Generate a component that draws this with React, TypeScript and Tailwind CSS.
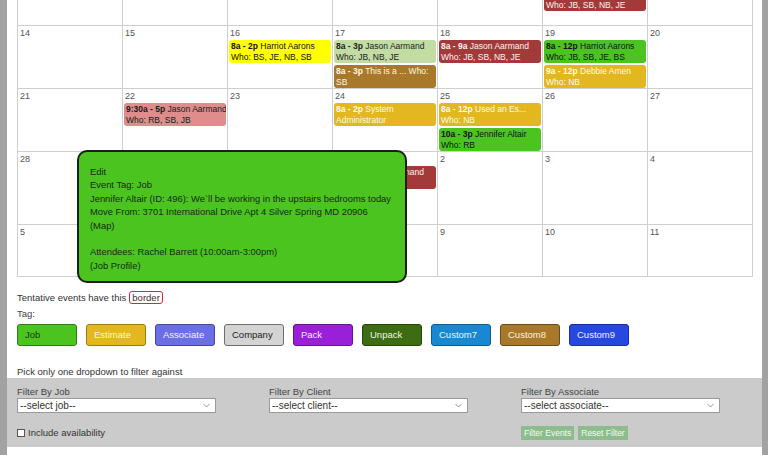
import type { ReactNode } from 'react';

type CalEvent = {
  time: string;
  text: ReactNode;
  tone: string;
};

type Week = {
  height: string;
  days: { date: number; events?: CalEvent[] }[];
};

const RED = 'bg-[#a33a3a] text-[#fdf2f2]';
const GOLD = 'bg-[#e2b71f] text-[#fffbe8]';
const GREEN = 'bg-[#4cc420] text-[#111]';
const BROWN = 'bg-[#a8792b] text-[#fff6e4]';
const SAGE = 'bg-[#c3dca4] text-[#222]';
const YELLOW = 'bg-[#ffff00] text-[#111]';
const PINK = 'bg-[#df8c8c] text-[#1a1a1a]';

const weeks: Week[] = [
  {
    height: 'h-[52px]',
    days: [
      { date: 7 },
      { date: 8 },
      { date: 9 },
      { date: 10 },
      { date: 11 },
      {
        date: 12,
        events: [{ time: '8a - 9a', text: <>Jason Aarmand<br />Who: JB, SB, NB, JE</>, tone: RED }]
      },
      { date: 13 }
    ]
  },
  {
    height: 'h-[63px]',
    days: [
      { date: 14 },
      { date: 15 },
      {
        date: 16,
        events: [{ time: '8a - 2p', text: <>Harriot Aarons<br />Who: BS, JE, NB, SB</>, tone: YELLOW }]
      },
      {
        date: 17,
        events: [
          { time: '8a - 3p', text: <>Jason Aarmand<br />Who: JB, NB, JE</>, tone: SAGE },
          { time: '8a - 3p', text: <>This is a ... Who:<br />SB</>, tone: BROWN }
        ]
      },
      {
        date: 18,
        events: [{ time: '8a - 9a', text: <>Jason Aarmand<br />Who: JB, SB, NB, JE</>, tone: RED }]
      },
      {
        date: 19,
        events: [
          { time: '8a - 12p', text: <>Harriot Aarons<br />Who: JB, SB, JE, BS</>, tone: GREEN },
          { time: '9a - 12p', text: <>Debbie Amen<br />Who: NB</>, tone: GOLD }
        ]
      },
      { date: 20 }
    ]
  },
  {
    height: 'h-[63px]',
    days: [
      { date: 21 },
      {
        date: 22,
        events: [{ time: '9:30a - 5p', text: <>Jason Aarmand<br />Who: RB, SB, JB</>, tone: PINK }]
      },
      { date: 23 },
      {
        date: 24,
        events: [{ time: '8a - 2p', text: <>System<br />Administrator</>, tone: GOLD }]
      },
      {
        date: 25,
        events: [
          { time: '8a - 12p', text: <>Used an Es...<br />Who: NB</>, tone: GOLD },
          { time: '10a - 3p', text: <>Jennifer Altair<br />Who: RB</>, tone: GREEN }
        ]
      },
      { date: 26 },
      { date: 27 }
    ]
  },
  {
    height: 'h-[73px]',
    days: [
      { date: 28 },
      { date: 29 },
      { date: 30 },
      {
        date: 1,
        events: [{ time: '8a - 9a', text: <>Jason Aarmand<br />Who: JB, SB</>, tone: RED }]
      },
      { date: 2 },
      { date: 3 },
      { date: 4 }
    ]
  },
  {
    height: 'h-[52px]',
    days: [
      { date: 5 },
      { date: 6 },
      { date: 7 },
      { date: 8 },
      { date: 9 },
      { date: 10 },
      { date: 11 }
    ]
  }
];

const tags = [
  { label: 'Job', cls: 'bg-[#4cc420] border-[#2f7d17] text-[#143d08]' },
  { label: 'Estimate', cls: 'bg-[#e2b71f] border-[#9c7c12] text-[#fff6d8]' },
  { label: 'Associate', cls: 'bg-[#6c6ee6] border-[#44469c] text-[#f2f2ff]' },
  { label: 'Company', cls: 'bg-[#d4d4d4] border-[#6d6d6d] text-[#222]' },
  { label: 'Pack', cls: 'bg-[#9a1fd8] border-[#651192] text-[#f6eaff]' },
  { label: 'Unpack', cls: 'bg-[#3e6c13] border-[#25450a] text-[#eef7e4]' },
  { label: 'Custom7', cls: 'bg-[#1888d2] border-[#0e5c90] text-[#eaf6ff]' },
  { label: 'Custom8', cls: 'bg-[#a8792b] border-[#6d4d17] text-[#fff3de]' },
  { label: 'Custom9', cls: 'bg-[#2748e0] border-[#182f9c] text-[#eef1ff]' }
];

function EventBox({ ev }: { ev: CalEvent }) {
  return (
    <div className={`mx-[1px] mb-[2px] overflow-hidden whitespace-nowrap rounded-[3px] px-[2px] py-[1px] text-[8.5px] leading-[10.5px] ${ev.tone}`}>
      <b>{ev.time}</b> {ev.text}
    </div>
  );
}

function FilterSelect({ label, placeholder }: { label: string; placeholder: string }) {
  return (
    <div className="w-[252px] shrink-0">
      <div className="text-[9.5px] leading-[12px] text-[#444]">{label}</div>
      <div className="flex h-[15px] w-[199px] items-center justify-between border border-[#9a9a9a] bg-white pl-[2px] pr-[5px]">
        <span className="text-[10px] text-[#333]">{placeholder}</span>
        <svg width="7" height="5" viewBox="0 0 7 5" fill="none">
          <path d="M0.5 1 L3.5 4 L6.5 1" stroke="#888" strokeWidth="0.9" />
        </svg>
      </div>
    </div>
  );
}

export default function App() {
  return (
    <div
      className="relative flex h-[455px] w-[768px] overflow-hidden bg-white text-[#333]"
      style={{ fontFamily: '"Liberation Sans", Arial, sans-serif' }}
    >
      <div className="w-[7px] shrink-0 bg-[#a2a2a2]" />

      <div className="flex w-[755px] shrink-0 flex-col">
        {/* calendar, first week scrolled partly out of view */}
        <div className="-mt-[26px] ml-[10px] w-[736px] border-l border-[#cfcfcf]">
          {weeks.map((week, wi) => (
            <div key={wi} className={`flex border-b border-[#cfcfcf] ${week.height}`}>
              {week.days.map((day, di) => (
                <div key={di} className="w-[105px] shrink-0 border-r border-[#cfcfcf]">
                  <div className="h-[14px] pl-[2px] pt-[2px] text-[9px] leading-[11px] text-[#555]">{day.date}</div>
                  {day.events?.map((ev, ei) => <EventBox key={ei} ev={ev} />)}
                </div>
              ))}
            </div>
          ))}
        </div>

        <div className="ml-[10px] mt-[14px] flex items-center text-[9.5px] leading-[13px] text-[#333]">
          Tentative events have this
          <span className="ml-[3px] rounded-[3px] border-[1.5px] border-[#d42a2a] px-[2px] leading-[11px]">border</span>
        </div>
        <div className="ml-[10px] mt-[4px] text-[9.5px] leading-[12px] text-[#444]">Tag:</div>
        <div className="ml-[10px] mt-[4px] flex gap-[9px]">
          {tags.map((t) => (
            <div
              key={t.label}
              className={`flex h-[22px] w-[60px] items-center rounded-[3px] border pl-[7px] text-[9.5px] ${t.cls}`}
            >
              {t.label}
            </div>
          ))}
        </div>

        <div className="ml-[10px] mt-[20px] text-[9.5px] leading-[12px] text-[#333]">Pick only one dropdown to filter against</div>

        <div className="h-[69px] bg-[#cbcbcb] pl-[10px] pt-[8px]">
          <div className="flex">
            <FilterSelect label="Filter By Job" placeholder="--select job--" />
            <FilterSelect label="Filter By Client" placeholder="--select client--" />
            <FilterSelect label="Filter By Associate" placeholder="--select associate--" />
          </div>
          <div className="mt-[13px] flex items-center">
            <div className="flex w-[504px] shrink-0 items-center gap-[3px]">
              <span className="h-[8px] w-[8px] border border-[#555] bg-white" />
              <span className="text-[9.5px] text-[#333]">Include availability</span>
            </div>
            <div className="flex gap-[4px]">
              <span className="flex h-[14px] items-center bg-[#8dbd8d] px-[3px] text-[8.5px] text-[#f2fbf2]">Filter Events</span>
              <span className="flex h-[14px] items-center bg-[#8dbd8d] px-[3px] text-[8.5px] text-[#f2fbf2]">Reset Filter</span>
            </div>
          </div>
        </div>
      </div>

      <div className="flex-1" />
      <div className="w-[6px] shrink-0 bg-[#a2a2a2]" />

      {/* event popover */}
      <div className="absolute left-[77px] top-[150px] h-[133px] w-[330px] rounded-[10px] border-2 border-[#1d1d1d] bg-[#4cc420] px-[11px] pt-[13px] text-[9.4px] leading-[13.4px] text-[#152a0c]">
        <div>Edit</div>
        <div>Event Tag: Job</div>
        <div>Jennifer Altair (ID: 496): We`ll be working in the upstairs bedrooms today</div>
        <div>Move From: 3701 International Drive Apt 4 Silver Spring MD 20906</div>
        <div>(Map)</div>
        <div className="h-[13.4px]" />
        <div>Attendees: Rachel Barrett (10:00am-3:00pm)</div>
        <div>(Job Profile)</div>
      </div>
    </div>
  );
}
